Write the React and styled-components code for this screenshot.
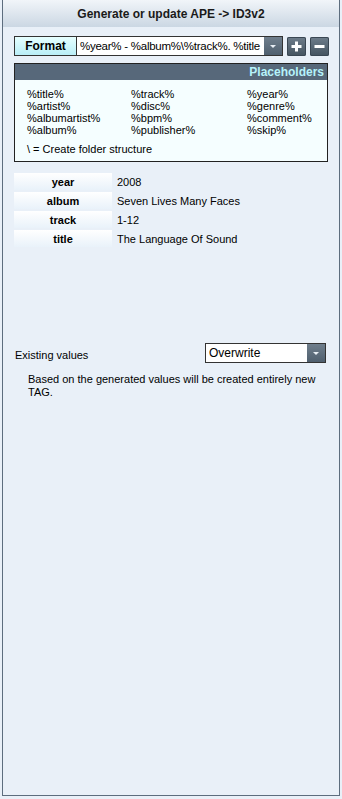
import styled, { createGlobalStyle } from "styled-components";

const Global = createGlobalStyle`
    html, body {
        margin: 0;
        padding: 0;
        background: #e9f0f8;
    }
    body {
        font-family: Tahoma, "Liberation Sans", "DejaVu Sans", sans-serif;
        font-size: 11px;
        color: #000;
    }
`;

const Frame = styled.div`
    width: 342px;
    height: 799px;
    padding: 0 2px 3px 2px;
    box-sizing: border-box;
    background: #e9f0f8;
`;

const Panel = styled.div`
    height: 100%;
    box-sizing: border-box;
    border: 1px solid #5d6d7e;
    border-top: none;
    background: #e9f0f8;
    display: flex;
    flex-direction: column;
`;

const Header = styled.div`
    height: 27px;
    display: flex;
    align-items: center;
    justify-content: center;
    background: linear-gradient(#f1f5f9, #cbd7e3);
    font-weight: bold;
    font-size: 12px;
    color: #1a1a1a;
    padding-top: 1px;
    box-sizing: border-box;
`;

const FormatRow = styled.div`
    display: flex;
    align-items: center;
    margin: 9px 0 0 11px;
    height: 20px;
`;

const FormatLabel = styled.div`
    width: 61px;
    height: 18px;
    border: 1px solid #333;
    border-right: none;
    background: linear-gradient(#e6ffff, #b9eef7);
    font-weight: bold;
    font-size: 12px;
    display: flex;
    align-items: center;
    justify-content: center;
`;

const Combo = styled.div`
    display: flex;
    height: 18px;
    border: 1px solid #333;
    background: #fff;
    width: ${({ $w }) => $w}px;
    box-sizing: content-box;
`;

const ComboText = styled.div`
    flex: 1;
    min-width: 0;
    padding-left: 3px;
    font-size: ${({ $size }) => $size || 12}px;
    letter-spacing: ${({ $track }) => $track || 0}px;
    display: flex;
    align-items: center;
    white-space: nowrap;
    overflow: hidden;
`;

const ComboArrow = styled.div`
    width: 18px;
    flex: none;
    background: linear-gradient(#6f7e8c, #4f5f6e);
    display: flex;
    align-items: center;
    justify-content: center;
    &::after {
        content: "";
        border-left: 3px solid transparent;
        border-right: 3px solid transparent;
        border-top: 3px solid #e8eef4;
    }
`;

const IconButton = styled.div`
    width: 19px;
    height: 19px;
    margin-left: ${({ $gap }) => $gap}px;
    border-radius: 2px;
    background: linear-gradient(#6e7d8b, #44535f);
    box-shadow: inset 0 0 0 1px #3a4753;
    display: flex;
    align-items: center;
    justify-content: center;
`;

const PlaceBox = styled.div`
    margin: 7px 11px 0 11px;
    border: 1px solid #222;
    background: #f5feff;
    height: 99px;
    box-sizing: border-box;
`;

const PlaceHead = styled.div`
    height: 16px;
    background: #57687a;
    color: #b6f3fb;
    font-weight: bold;
    font-size: 12px;
    text-align: right;
    padding-right: 3px;
    line-height: 16px;
`;

const PlaceGrid = styled.div`
    display: grid;
    grid-template-columns: 104px 116px 1fr;
    padding: 8px 0 0 12px;
    line-height: 12px;
`;

const FolderNote = styled.div`
    padding: 7px 0 0 12px;
`;

const TagList = styled.div`
    margin: 11px 0 0 11px;
    display: flex;
    flex-direction: column;
    gap: 2px;
`;

const TagRow = styled.div`
    display: flex;
    align-items: center;
    height: 17px;
`;

const TagKey = styled.div`
    width: 98px;
    height: 17px;
    background: linear-gradient(#ffffff, #e9f2fa);
    font-weight: bold;
    display: flex;
    align-items: center;
    justify-content: center;
`;

const TagValue = styled.div`
    padding-left: 5px;
`;

const ExistingRow = styled.div`
    margin: 96px 0 0 12px;
    display: flex;
    align-items: center;
    justify-content: space-between;
    padding-right: 13px;
`;

const ExistingLabel = styled.div`
    padding-top: 3px;
`;

const Note = styled.div`
    margin: 10px 12px 0 25px;
    line-height: 13px;
`;

export default function App() {
    const placeholders = [
        "%title%", "%track%", "%year%",
        "%artist%", "%disc%", "%genre%",
        "%albumartist%", "%bpm%", "%comment%",
        "%album%", "%publisher%", "%skip%",
    ];
    const tags = [
        ["year", "2008"],
        ["album", "Seven Lives Many Faces"],
        ["track", "1-12"],
        ["title", "The Language Of Sound"],
    ];
    return (
        <Frame>
            <Global />
            <Panel>
                <Header>Generate or update APE -&gt; ID3v2</Header>
                <FormatRow>
                    <FormatLabel>Format</FormatLabel>
                    <Combo $w={205}>
                        <ComboText $size={11.5} $track={-0.25}>
                            %year% - %album%\%track%. %title
                        </ComboText>
                        <ComboArrow />
                    </Combo>
                    <IconButton $gap={4}>
                        <svg width="11" height="11" viewBox="0 0 11 11">
                            <rect x="4" y="0.5" width="3" height="10" fill="#fff" />
                            <rect x="0.5" y="4" width="10" height="3" fill="#fff" />
                        </svg>
                    </IconButton>
                    <IconButton $gap={4}>
                        <svg width="11" height="11" viewBox="0 0 11 11">
                            <rect x="0.5" y="4" width="10" height="3" fill="#fff" />
                        </svg>
                    </IconButton>
                </FormatRow>
                <PlaceBox>
                    <PlaceHead>Placeholders</PlaceHead>
                    <PlaceGrid>
                        {placeholders.map((p) => (
                            <div key={p}>{p}</div>
                        ))}
                    </PlaceGrid>
                    <FolderNote>\ = Create folder structure</FolderNote>
                </PlaceBox>
                <TagList>
                    {tags.map(([k, v]) => (
                        <TagRow key={k}>
                            <TagKey>{k}</TagKey>
                            <TagValue>{v}</TagValue>
                        </TagRow>
                    ))}
                </TagList>
                <ExistingRow>
                    <ExistingLabel>Existing values</ExistingLabel>
                    <Combo $w={119}>
                        <ComboText>Overwrite</ComboText>
                        <ComboArrow />
                    </Combo>
                </ExistingRow>
                <Note>
                    Based on the generated values will be created entirely new TAG.
                </Note>
            </Panel>
        </Frame>
    );
}
